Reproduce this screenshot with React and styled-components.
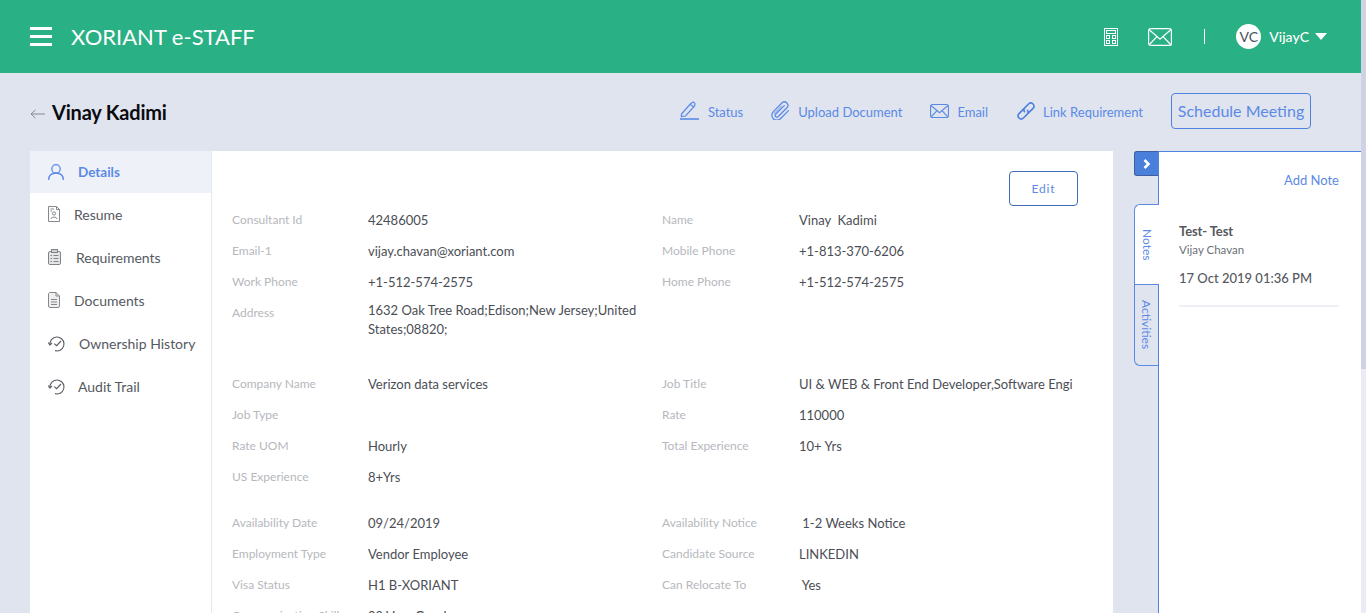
import React from 'react'
import styled, { createGlobalStyle } from 'styled-components'

const Global = createGlobalStyle`
  html, body {
    margin: 0;
    height: 613px;
    overflow: hidden;
    background: #e0e4ef;
    font-family: Lato, 'Open Sans', sans-serif;
  }
  * { box-sizing: border-box; }
`

const Page = styled.div`
  width: 1366px;
  height: 613px;
  overflow: hidden;
  display: flex;
`

const Main = styled.div`
  width: 1361px;
  flex: none;
  display: flex;
  flex-direction: column;
`

const ScrollTrack = styled.div`
  width: 5px;
  flex: none;
  background: #ecebf5;
`

const ScrollThumb = styled.div`
  height: 369px;
  background: #cfd2e2;
`

const Header = styled.header`
  flex: 0 0 73px;
  background: #29b084;
  display: flex;
  align-items: center;
  padding: 0 34px 0 30px;
  color: #fff;
`

const Burger = styled.div`
  width: 22px;
  height: 19px;
  display: flex;
  flex-direction: column;
  justify-content: space-between;
  margin-right: 19px;
  span {
    height: 3px;
    background: #fff;
  }
`

const Brand = styled.div`
  font-size: 22px;
  flex: 1;
`

const HeaderIcons = styled.div`
  display: flex;
  align-items: center;
  svg { display: block; }
`

const Divider = styled.span`
  width: 1px;
  height: 15px;
  background: #fff;
  margin: 0 31px 0 32px;
`

const Avatar = styled.span`
  width: 25px;
  height: 25px;
  border-radius: 50%;
  background: #fff;
  color: #45505e;
  font-size: 14px;
  display: flex;
  align-items: center;
  justify-content: center;
  margin-right: 8px;
`

const UserName = styled.span`
  font-size: 14px;
  font-weight: 500;
  margin-right: 6px;
`

const Caret = styled.span`
  width: 0;
  height: 0;
  border-left: 6.5px solid transparent;
  border-right: 6.5px solid transparent;
  border-top: 7px solid #fff;
`

const TitleBar = styled.div`
  flex: 0 0 78px;
  display: flex;
  align-items: center;
  padding: 0 50px 3px 30px;
`

const Title = styled.h1`
  margin: 0;
  flex: 1;
  display: flex;
  align-items: center;
  gap: 7px;
  padding-top: 3px;
  font-size: 20px;
  font-weight: 700;
  color: #0b0b0f;
  letter-spacing: -0.2px;
  svg { margin-top: 4px; }
`

const Actions = styled.div`
  display: flex;
  align-items: center;
`

const Action = styled.a`
  display: flex;
  align-items: center;
  gap: ${p => p.$gap || 8}px;
  margin-right: 28px;
  color: #5b8ae6;
  font-size: 13px;
  span { padding-top: 3px; }
`

const Schedule = styled.button`
  width: 140px;
  height: 36px;
  border: 1px solid #4f81e0;
  border-radius: 4px;
  background: transparent;
  color: #5b8ae6;
  font: 400 16px Lato, sans-serif;
  padding: 0;
`

const Body = styled.div`
  flex: 1;
  display: flex;
  padding-left: 30px;
  min-height: 0;
`

const Card = styled.div`
  width: 1083px;
  background: #fff;
  display: flex;
`

const Side = styled.nav`
  width: 182px;
  flex: none;
  border-right: 1px solid #e6e8f0;
`

const SideItem = styled.div`
  height: ${p => (p.$active ? 42 : 43)}px;
  display: flex;
  align-items: center;
  padding: 0 0 1px 18px;
  gap: ${p => p.$gap}px;
  font-size: ${p => (p.$active ? 13.5 : 14)}px;
  font-weight: ${p => (p.$active ? 700 : 400)};
  color: ${p => (p.$active ? '#5b8ae6' : '#55595f')};
  background: ${p => (p.$active ? '#eff1f8' : 'transparent')};
  svg { flex: none; display: block; }
`

const Content = styled.div`
  flex: 1;
  min-width: 0;
  padding: 20px 20px 0;
  display: flex;
  flex-direction: column;
`

const EditRow = styled.div`
  display: flex;
  justify-content: flex-end;
  padding-right: 15px;
  height: 33px;
`

const EditButton = styled.button`
  width: 69px;
  height: 35px;
  border: 1px solid #3f6bb8;
  border-radius: 4px;
  background: #fff;
  color: #5b8ae6;
  font: 400 12px Lato, sans-serif;
  letter-spacing: 0.8px;
  padding: 0;
`

const Section = styled.div`
  display: grid;
  grid-template-columns: 136px 294px 137px 274px;
  grid-auto-rows: 31px;
  margin-bottom: ${p => p.$mb}px;
`

const Label = styled.div`
  font-size: 12px;
  line-height: 31px;
  color: #b6b8bd;
  white-space: nowrap;
`

const Value = styled.div`
  font-size: 13px;
  line-height: 31px;
  padding-top: 1px;
  color: #4b4e55;
  white-space: pre;
`

const Wrapped = styled(Value)`
  grid-row: span 2;
  white-space: normal;
  line-height: 19px;
  padding: 4px 20px 0 0;
`

const Rail = styled.div`
  width: 24px;
  margin-left: 21px;
  flex: none;
  display: flex;
  flex-direction: column;
`

const Toggle = styled.div`
  height: 25px;
  background: #4a7fdc;
  border: 1px solid #3f5f9c;
  border-right: 0;
  border-radius: 3px 0 0 3px;
  display: flex;
  align-items: center;
  justify-content: center;
  margin-bottom: 28px;
`

const Tab = styled.div`
  height: 81px;
  width: ${p => (p.$active ? 25 : 24)}px;
  background: ${p => (p.$active ? '#fff' : 'transparent')};
  border: 1px solid #5b8ae6;
  border-right: 0;
  border-top-width: ${p => (p.$active ? 1 : 0)}px;
  border-radius: ${p => (p.$active ? '6px 0 0 0' : '0 0 0 6px')};
  color: #5b8ae6;
  font-size: 12px;
  writing-mode: vertical-rl;
  display: flex;
  align-items: center;
  justify-content: center;
  position: relative;
  z-index: 1;
`

const NotesPanel = styled.aside`
  width: 203px;
  flex: none;
  background: #fff;
  border-left: 1px solid #4f81e0;
  border-top: 1px solid #4f81e0;
  padding: 20px 22px 0 20px;
`

const AddNote = styled.div`
  text-align: right;
  color: #5b8ae6;
  font-size: 13px;
  line-height: 16px;
  margin-bottom: 35px;
`

const NoteTitle = styled.div`
  font-size: 13px;
  font-weight: 700;
  color: #55585e;
  line-height: 16px;
  letter-spacing: -0.1px;
`

const NoteAuthor = styled.div`
  font-size: 11.5px;
  color: #6c6f75;
  line-height: 16px;
  margin-top: 3px;
`

const NoteDate = styled.div`
  font-size: 13px;
  font-weight: 500;
  color: #55585e;
  line-height: 16px;
  margin: 12px 0 19px;
  white-space: nowrap;
`

const Rule = styled.div`
  height: 2px;
  background: #eeeff4;
`

const CalcIcon = () => (
  <svg width="14" height="18" viewBox="0 0 14 18" fill="none" stroke="#fff" strokeWidth="1" style={{ marginRight: 30 }}>
    <rect x=".5" y=".5" width="13" height="17" />
    <rect x="2.5" y="2.5" width="9" height="3" />
    <rect x="2.5" y="7.5" width="3" height="3" />
    <rect x="8.5" y="7.5" width="3" height="3" />
    <rect x="2.5" y="12.5" width="3" height="3" />
    <rect x="8.5" y="12.5" width="3" height="3" />
  </svg>
)

const MailIcon = ({ color, w, h, sw }) => (
  <svg width={w} height={h} viewBox={`0 0 ${w} ${h}`} fill="none" stroke={color} strokeWidth={sw}>
    <rect x={sw / 2} y={sw / 2} width={w - sw} height={h - sw} rx="2" />
    <path d={`M1 1.5 L${w / 2} ${h * 0.62} L${w - 1} 1.5 M1.5 ${h - 1.5} L${w * 0.37} ${h * 0.48} M${w - 1.5} ${h - 1.5} L${w * 0.63} ${h * 0.48}`} />
  </svg>
)

const PencilIcon = () => (
  <svg width="19" height="19" viewBox="0 0 19 19" fill="none" stroke="#5b8ae6" strokeWidth="1.2">
    <path d="M1.5 13 L10.5 2.8 L13.2 1 L15 2.4 L14.6 5 L5.5 15 L1.3 15.6 Z M10.2 3.4 L14 6" />
    <path d="M0 18 H19" strokeWidth="1.6" />
  </svg>
)

const ClipIcon = () => (
  <svg width="19" height="19" viewBox="0 0 19 19" fill="none" stroke="#5b8ae6" strokeWidth="1.3" strokeLinecap="round">
    <path d="M13.3 4.6 L4.6 13.3 A1.7 1.7 0 0 0 7 15.7 L16.2 6.5 A3.5 3.5 0 0 0 11.3 1.6 L2.3 10.6 A5 5 0 0 0 9.4 17.7 L17.5 9.6" />
    <path d="M10.5 5.2 L3.3 12.3" opacity=".5" />
  </svg>
)

const LinkIcon = () => (
  <svg width="20" height="20" viewBox="0 0 20 20" fill="none" stroke="#4f81e0" strokeWidth="1.6">
    <path d="M8.2 7.4 L3 12.6 A3.1 3.1 0 0 0 7.4 17 L11.3 13.1 A3.1 3.1 0 0 0 11 8.8" />
    <path d="M11.8 12.6 L17 7.4 A3.1 3.1 0 0 0 12.6 3 L8.7 6.9 A3.1 3.1 0 0 0 9 11.2" />
  </svg>
)

const UserIcon = () => (
  <svg width="16" height="16" viewBox="0 0 16 16" fill="none" stroke="#5b8ae6" strokeWidth="1.3">
    <circle cx="8" cy="4.9" r="4.2" />
    <path d="M.7 16 C.7 11.6 3.6 9 8 9 C12.4 9 15.3 11.6 15.3 16" />
  </svg>
)

const ResumeIcon = () => (
  <svg width="12" height="16" viewBox="0 0 12 16" fill="none" stroke="#85888d" strokeWidth="1">
    <path d="M.5 .5 H8.5 L11.5 3.5 V15.5 H.5 Z M8.5 .5 V3.5 H11.5" />
    <path d="M2.5 3 H6 M2.5 5 H4" />
    <circle cx="6" cy="7.5" r="1.6" />
    <path d="M3 13 C3 10.5 9 10.5 9 13" />
  </svg>
)

const ClipboardIcon = () => (
  <svg width="13" height="16" viewBox="0 0 13 16" fill="none" stroke="#7f8287" strokeWidth="1">
    <rect x=".5" y="2.5" width="12" height="13" rx="1.5" fill="#e5e6e8" />
    <rect x="3.5" y=".5" width="6" height="3" fill="#d2d3d6" />
    <path d="M2.5 6.5 H4 M5.5 6.5 H10.5 M2.5 9.5 H4 M5.5 9.5 H10.5 M2.5 12.5 H4 M5.5 12.5 H10.5" />
  </svg>
)

const DocIcon = () => (
  <svg width="12" height="16" viewBox="0 0 12 16" fill="#eeeeef" stroke="#85888d" strokeWidth="1">
    <path d="M1.5 .5 H8 L11.5 4 V14 A1.5 1.5 0 0 1 10 15.5 H2 A1.5 1.5 0 0 1 .5 14 V1.5 Z" />
    <path d="M8 .5 V4 H11.5 M3 7.5 H9 M3 10 H9 M3 12.5 H9" fill="none" />
  </svg>
)

const HistoryIcon = () => (
  <svg width="18" height="17" viewBox="0 0 18 17" fill="none" stroke="#5a5d63" strokeWidth="1.1">
    <path d="M2 9.5 A7 7 0 1 1 9.5 16 L7 15.6" />
    <path d="M.3 7.6 L2 10 L4 7.8" />
    <path d="M6.3 8.6 L8.6 10.6 L13 6" strokeWidth="1.2" />
  </svg>
)

const nav = [
  { label: 'Resume', icon: <ResumeIcon />, gap: 14 },
  { label: 'Requirements', icon: <ClipboardIcon />, gap: 15 },
  { label: 'Documents', icon: <DocIcon />, gap: 14 },
  { label: 'Ownership History', icon: <HistoryIcon />, gap: 13 },
  { label: 'Audit Trail', icon: <HistoryIcon />, gap: 12 },
]

const sections = [
  [
    ['Consultant Id', '42486005', 'Name', 'Vinay  Kadimi'],
    ['Email-1', 'vijay.chavan@xoriant.com', 'Mobile Phone', '+1-813-370-6206'],
    ['Work Phone', '+1-512-574-2575', 'Home Phone', '+1-512-574-2575'],
    ['Address', '1632 Oak Tree Road;Edison;New Jersey;United States;08820;', '', ''],
  ],
  [
    ['Company Name', 'Verizon data services', 'Job Title', 'UI & WEB & Front End Developer,Software Engi'],
    ['Job Type', '', 'Rate', '110000'],
    ['Rate UOM', 'Hourly', 'Total Experience', '10+ Yrs'],
    ['US Experience', '8+Yrs', '', ''],
  ],
  [
    ['Availability Date', '09/24/2019', 'Availability Notice', ' 1-2 Weeks Notice'],
    ['Employment Type', 'Vendor Employee', 'Candidate Source', 'LINKEDIN'],
    ['Visa Status', 'H1 B-XORIANT', 'Can Relocate To', ' Yes'],
    ['Communication Skills', '09 Very Good', '', ''],
  ],
]

const App = () => (
  <Page>
    <Global />
    <Main>
      <Header>
        <Burger><span /><span /><span /></Burger>
        <Brand>XORIANT e-STAFF</Brand>
        <HeaderIcons>
          <CalcIcon />
          <MailIcon color="#fff" w={24} h={18} sw={1.2} />
          <Divider />
          <Avatar>VC</Avatar>
          <UserName>VijayC</UserName>
          <Caret />
        </HeaderIcons>
      </Header>
      <TitleBar>
        <Title>
          <svg width="15" height="10" viewBox="0 0 15 10" fill="none" stroke="#85888f" strokeWidth="1">
            <path d="M15 5 H1 M5.5 .8 L1 5 L5.5 9.2" />
          </svg>
          Vinay Kadimi
        </Title>
        <Actions>
          <Action $gap={9}><PencilIcon /><span>Status</span></Action>
          <Action><ClipIcon /><span>Upload Document</span></Action>
          <Action><MailIcon color="#5b8ae6" w={19} h={14} sw={1.1} /><span>Email</span></Action>
          <Action $gap={7}><LinkIcon /><span>Link Requirement</span></Action>
          <Schedule>Schedule Meeting</Schedule>
        </Actions>
      </TitleBar>
      <Body>
        <Card>
          <Side>
            <SideItem $active $gap={14}><UserIcon />Details</SideItem>
            {nav.map(({ label, icon, gap }) => (
              <SideItem key={label} $gap={gap}>{icon}{label}</SideItem>
            ))}
          </Side>
          <Content>
            <EditRow><EditButton>Edit</EditButton></EditRow>
            {sections.map((rows, i) => (
              <Section key={i} $mb={i === 0 ? 9 : 15}>
                {rows.flatMap((row, r) => {
                  const long = row[0] === 'Address'
                  return [
                    <Label key={`${r}a`}>{row[0]}</Label>,
                    long ? <Wrapped key={`${r}b`}>{row[1]}</Wrapped> : <Value key={`${r}b`}>{row[1]}</Value>,
                    <Label key={`${r}c`}>{row[2]}</Label>,
                    <Value key={`${r}d`}>{row[3]}</Value>,
                  ]
                })}
              </Section>
            ))}
          </Content>
        </Card>
        <Rail>
          <Toggle>
            <svg width="8" height="10" viewBox="0 0 8 10" fill="none" stroke="#fff" strokeWidth="2.6">
              <path d="M1.5 1 L5.5 5 L1.5 9" />
            </svg>
          </Toggle>
          <Tab $active>Notes</Tab>
          <Tab>Activities</Tab>
        </Rail>
        <NotesPanel>
          <AddNote>Add Note</AddNote>
          <NoteTitle>Test- Test</NoteTitle>
          <NoteAuthor>Vijay Chavan</NoteAuthor>
          <NoteDate>17 Oct 2019 01:36 PM</NoteDate>
          <Rule />
        </NotesPanel>
      </Body>
    </Main>
    <ScrollTrack><ScrollThumb /></ScrollTrack>
  </Page>
)

export default App
